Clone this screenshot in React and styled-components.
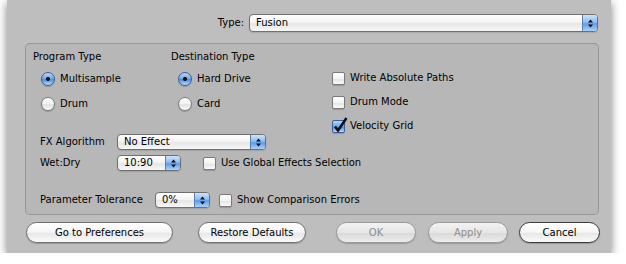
import React from "react";
import styled, { createGlobalStyle, css } from "styled-components";

const Global = createGlobalStyle`
  html, body { margin: 0; padding: 0; background: #ffffff; }
  body { font-family: "Lucida Grande", "DejaVu Sans", sans-serif; font-size: 10px; color: #000; }
  * { box-sizing: border-box; }
`;

const Win = styled.div`
  margin-left: 7px;
  width: 604px;
  height: 253px;
  background: #bebebe;
  box-shadow: 0 3px 9px rgba(0, 0, 0, 0.5);
  padding: 14px 12px 0 18px;
  display: flex;
  flex-direction: column;
`;

const TypeRow = styled.div`
  display: flex;
  justify-content: flex-end;
  align-items: center;
  gap: 5px;
  padding-right: 1px;
  height: 18px;
`;

const Label = styled.span`
  white-space: nowrap;
  line-height: 14px;
  ${(p) => p.$w && css`width: ${p.$w}px; flex: none;`}
`;

const PopupBox = styled.div`
  position: relative;
  width: ${(p) => p.$w}px;
  height: ${(p) => p.$h || 16}px;
  flex: none;
  border: 1px solid #6f6f6f;
  border-radius: 4px;
  background: linear-gradient(#ffffff 0%, #f4f4f4 45%, #e6e6e6 55%, #f7f7f7 100%);
  box-shadow: 0 1px 1px rgba(0, 0, 0, 0.12);
  display: flex;
  align-items: center;
  padding-left: 6px;
  overflow: hidden;
`;

const PopupText = styled.span`
  line-height: 14px;
  white-space: nowrap;
`;

const Cap = styled.div`
  position: absolute;
  top: 0;
  right: 0;
  bottom: 0;
  width: 15px;
  border-left: 1px solid #5a7fb4;
  background: linear-gradient(#cfe3fb 0%, #8ebdf2 45%, #5d9ce8 55%, #a9d3fd 100%);
  display: flex;
  align-items: center;
  justify-content: center;
`;

const Arrows = () => (
  <svg width="7" height="9" viewBox="0 0 7 9">
    <path d="M3.5 0.5 L6 3.5 L1 3.5 Z" fill="#111" />
    <path d="M3.5 8.5 L6 5.5 L1 5.5 Z" fill="#111" />
  </svg>
);

const Popup = ({ w, h, children }) => (
  <PopupBox $w={w} $h={h}>
    <PopupText>{children}</PopupText>
    <Cap>
      <Arrows />
    </Cap>
  </PopupBox>
);

const Group = styled.div`
  margin-top: 11px;
  width: 574px;
  height: 172px;
  border: 1px solid rgba(0, 0, 0, 0.18);
  border-radius: 5px;
  background: rgba(0, 0, 0, 0.035);
  padding: 6px 8px 6px 7px;
  display: flex;
  flex-direction: column;
`;

const TopGrid = styled.div`
  display: grid;
  grid-template-columns: 138px 161px 1fr;
  align-items: start;
`;

const Col = styled.div`
  display: flex;
  flex-direction: column;
  padding-top: ${(p) => p.$pt || 0}px;
  gap: ${(p) => p.$gap || 0}px;
`;

const Heading = styled.div`
  line-height: 14px;
  height: 14px;
  margin-bottom: 2px;
  white-space: nowrap;
`;

const ChoiceRow = styled.div`
  display: flex;
  align-items: center;
  height: ${(p) => p.$h || 25}px;
  padding-left: ${(p) => p.$indent || 0}px;
  gap: 5px;
  flex: none;
`;

const RadioDot = styled.span`
  width: 14px;
  height: 14px;
  border-radius: 50%;
  flex: none;
  border: 1px solid ${(p) => (p.$on ? "#3d5f93" : "#7d7d7d")};
  background: ${(p) =>
    p.$on
      ? "radial-gradient(circle at 50% 50%, #111 0, #111 1.8px, transparent 2.3px), linear-gradient(#b9d6f7 0%, #6aa6ea 50%, #4c8fe2 55%, #b3dafd 100%)"
      : "linear-gradient(#ffffff 0%, #f2f2f2 50%, #e2e2e2 55%, #fbfbfb 100%)"};
  box-shadow: 0 1px 1px rgba(0, 0, 0, 0.2);
`;

const Radio = ({ on, label, indent }) => (
  <ChoiceRow $indent={indent}>
    <RadioDot $on={on} />
    <Label>{label}</Label>
  </ChoiceRow>
);

const Box = styled.span`
  position: relative;
  width: 13px;
  height: 13px;
  flex: none;
  border-radius: 2px;
  border: 1px solid ${(p) => (p.$on ? "#3d5f93" : "#7a7a7a")};
  background: ${(p) =>
    p.$on
      ? "linear-gradient(#b9d6f7 0%, #6aa6ea 50%, #4c8fe2 55%, #b3dafd 100%)"
      : "linear-gradient(#ffffff 0%, #f3f3f3 50%, #e4e4e4 55%, #fbfbfb 100%)"};
  box-shadow: 0 1px 1px rgba(0, 0, 0, 0.18);
`;

const Tick = styled.svg`
  position: absolute;
  left: 0px;
  top: -4px;
`;

const Check = ({ on, label, h, indent }) => (
  <ChoiceRow $h={h || 16} $indent={indent}>
    <Box $on={on}>
      {on && (
        <Tick width="15" height="16" viewBox="0 0 15 16">
          <path d="M2 9.5 L5 13.5 L13.5 1" fill="none" stroke="#111" strokeWidth="2.5" strokeLinejoin="miter" />
        </Tick>
      )}
    </Box>
    <Label>{label}</Label>
  </ChoiceRow>
);

const FieldRow = styled.div`
  display: flex;
  align-items: center;
  height: 16px;
  margin-top: ${(p) => p.$mt || 0}px;
  padding-left: 7px;
`;

const Spacer = styled.span`
  width: ${(p) => p.$w}px;
  flex: none;
`;

const ButtonRow = styled.div`
  display: flex;
  align-items: center;
  margin-top: 7px;
  padding-left: 1px;
`;

const Button = styled.div`
  width: ${(p) => p.$w}px;
  height: 21px;
  margin-left: ${(p) => p.$ml || 0}px;
  flex: none;
  border-radius: 11px;
  border: 1px solid ${(p) => (p.$disabled ? "#9a9a9a" : p.$strong ? "#3a3a3a" : "#707070")};
  background: ${(p) =>
    p.$disabled
      ? "linear-gradient(#f3f3f3 0%, #e6e6e6 50%, #dadada 55%, #ececec 100%)"
      : "linear-gradient(#ffffff 0%, #f6f6f6 48%, #e8e8e8 55%, #fafafa 100%)"};
  box-shadow: 0 1px 1px rgba(0, 0, 0, 0.2);
  color: ${(p) => (p.$disabled ? "#8e8e8e" : "#000")};
  display: flex;
  align-items: center;
  justify-content: center;
  line-height: 14px;
  white-space: nowrap;
`;

export default function App() {
  return (
    <>
      <Global />
      <Win>
        <TypeRow>
          <Label>Type:</Label>
          <Popup w={349} h={18}>Fusion</Popup>
        </TypeRow>
        <Group>
          <TopGrid>
            <Col>
              <Heading>Program Type</Heading>
              <Radio on indent={8} label="Multisample" />
              <Radio indent={8} label="Drum" />
            </Col>
            <Col>
              <Heading>Destination Type</Heading>
              <Radio on indent={7} label="Hard Drive" />
              <Radio indent={7} label="Card" />
            </Col>
            <Col $pt={20} $gap={8}>
              <Check label="Write Absolute Paths" />
              <Check label="Drum Mode" />
              <Check on label="Velocity Grid" />
            </Col>
          </TopGrid>
          <FieldRow $mt={0}>
            <Label $w={77}>FX Algorithm</Label>
            <Popup w={149}>No Effect</Popup>
          </FieldRow>
          <FieldRow $mt={5}>
            <Label $w={77}>Wet:Dry</Label>
            <Popup w={64}>10:90</Popup>
            <Spacer $w={22} />
            <Check label="Use Global Effects Selection" />
          </FieldRow>
          <FieldRow $mt={21}>
            <Label $w={115}>Parameter Tolerance</Label>
            <Popup w={55}>0%</Popup>
            <Spacer $w={9} />
            <Check label="Show Comparison Errors" />
          </FieldRow>
        </Group>
        <ButtonRow>
          <Button $w={147}>Go to Preferences</Button>
          <Button $w={108} $ml={25}>Restore Defaults</Button>
          <Button $w={80} $ml={30} $disabled>OK</Button>
          <Button $w={80} $ml={12} $disabled>Apply</Button>
          <Button $w={81} $ml={11} $strong>Cancel</Button>
        </ButtonRow>
      </Win>
    </>
  );
}
